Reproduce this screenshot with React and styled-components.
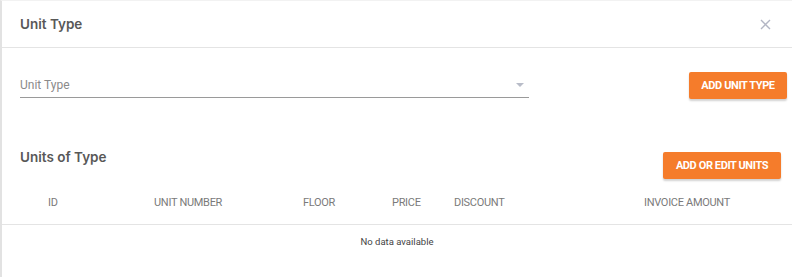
import React from 'react';
import styled, { createGlobalStyle } from 'styled-components';

const GlobalStyle = createGlobalStyle`
  html, body {
    margin: 0;
    padding: 0;
    background: #fff;
  }
  body {
    font-family: Roboto, "Liberation Sans", sans-serif;
  }
`;

const Dialog = styled.div`
  width: 792px;
  height: 277px;
  box-sizing: border-box;
  border-left: 2px solid #e2e2e2;
  border-top: 1px solid #f2f2f2;
  background: #fff;
  display: flex;
  flex-direction: column;
`;

const Header = styled.div`
  height: 46px;
  display: flex;
  align-items: center;
  justify-content: space-between;
  padding: 0 20px 0 18px;
  border-bottom: 1px solid #e4e4e4;
`;

const Title = styled.h2`
  margin: 0;
  font-family: Inter, "Open Sans", sans-serif;
  font-size: 13.5px;
  line-height: 18px;
  font-weight: 600;
  color: #585858;
`;

const CloseButton = styled.button`
  border: 0;
  background: none;
  padding: 0;
  width: 14px;
  height: 14px;
  display: flex;
  align-items: center;
  justify-content: center;
  cursor: pointer;
`;

const Body = styled.div`
  padding: 24px 5px 0 18px;
`;

const InputRow = styled.div`
  display: flex;
  align-items: center;
  justify-content: space-between;
`;

const SelectField = styled.div`
  width: 509px;
  height: 25px;
  border-bottom: 1px solid #9a9a9a;
  display: flex;
  align-items: center;
  justify-content: space-between;
  padding-right: 5px;
  box-sizing: border-box;
`;

const Placeholder = styled.span`
  font-size: 12px;
  color: #8a8a8a;
`;

const Caret = styled.span`
  width: 0;
  height: 0;
  border-left: 4px solid transparent;
  border-right: 4px solid transparent;
  border-top: 4px solid #b8bcc8;
`;

const OrangeButton = styled.button`
  height: 27px;
  width: ${p => p.w}px;
  margin-top: ${p => p.offset || 0}px;
  border: 0;
  border-radius: 2px;
  background: #f57c2b;
  color: #fff;
  font-family: Roboto, "Liberation Sans", sans-serif;
  font-weight: 700;
  font-size: 11px;
  letter-spacing: -0.4px;
  text-transform: uppercase;
  box-shadow: 0 2px 2px rgba(0, 0, 0, 0.18);
  cursor: pointer;
  padding: 0;
`;

const SectionRow = styled.div`
  margin-top: 49px;
  display: flex;
  align-items: flex-start;
  justify-content: space-between;
  padding: 0 11px 0 18px;
`;

const HeadRow = styled.div`
  display: grid;
  grid-template-columns: 106px 149px 89px 62px 190px 1fr;
  padding-left: 46px;
  margin-top: 2px;
  height: 43px;
  align-items: center;
  border-bottom: 1px solid #e4e4e4;
`;

const HeadCell = styled.span`
  font-size: 11px;
  color: #7a7a7a;
  letter-spacing: -0.3px;
  white-space: nowrap;
`;

const EmptyRow = styled.div`
  height: 32px;
  display: flex;
  align-items: center;
  justify-content: center;
  font-size: 9.5px;
  color: #444;
`;

const columns = ['ID', 'Unit Number', 'Floor', 'Price', 'Discount', 'Invoice Amount'];

export default function App() {
  return (
    <>
      <GlobalStyle />
      <Dialog>
        <Header>
          <Title>Unit Type</Title>
          <CloseButton aria-label="close">
            <svg width="11" height="11" viewBox="0 0 11 11">
              <path d="M1 1L10 10M10 1L1 10" stroke="#b3b6c4" strokeWidth="1.4" />
            </svg>
          </CloseButton>
        </Header>
        <Body>
          <InputRow>
            <SelectField>
              <Placeholder>Unit Type</Placeholder>
              <Caret />
            </SelectField>
            <OrangeButton w={98}>Add Unit Type</OrangeButton>
          </InputRow>
        </Body>
        <SectionRow>
          <Title>Units of Type</Title>
          <OrangeButton w={118} offset={4}>Add or Edit Units</OrangeButton>
        </SectionRow>
        <HeadRow>
          {columns.map(c => (
            <HeadCell key={c}>{c.toUpperCase()}</HeadCell>
          ))}
        </HeadRow>
        <EmptyRow>No data available</EmptyRow>
      </Dialog>
    </>
  );
}
